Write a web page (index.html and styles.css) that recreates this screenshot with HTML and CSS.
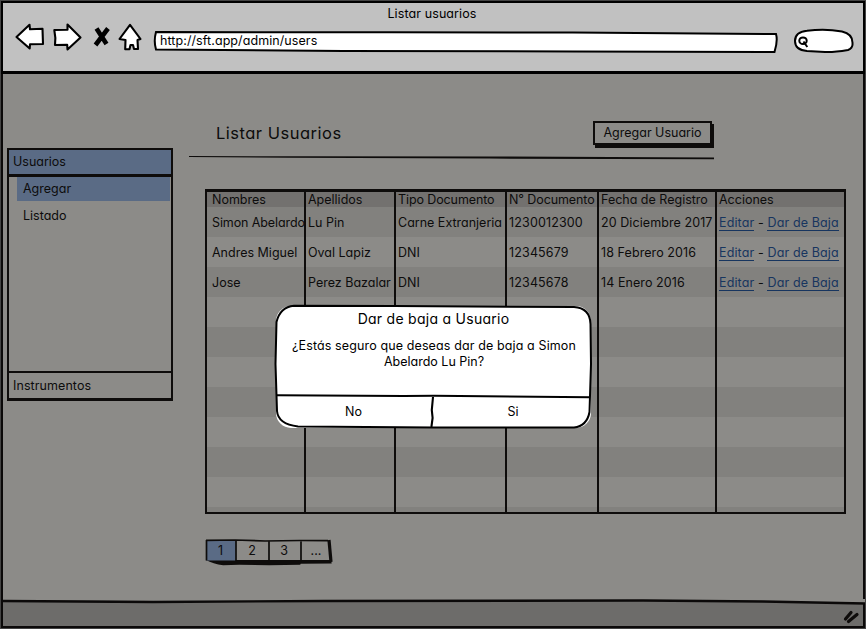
FILE: index.html
```html
<!DOCTYPE html>
<html lang="es">
<head>
<meta charset="utf-8">
<title>Listar usuarios</title>
<link rel="stylesheet" href="styles.css">
</head>
<body>
<div class="window">
  <header class="chrome">
    <div class="window-title">Listar usuarios</div>
    <div class="toolbar">
      <svg class="nav-icons" width="130" height="32" viewBox="0 0 130 32">
        <g fill="#fff" stroke="#000" stroke-width="2.1" stroke-linejoin="round">
          <path d="M3.500 16 16.500 3.800l.5 4.500 12.500-.5.5 15.200-13 .2-.3 4.300z"/>
          <path d="M41.300 9l13.200-.3V3.500L67.500 16.500 54.500 28.500l-.3-4.800-12.200.3q1-7-.7-15z"/>
          <path d="M106.500 18 117 3.800 127.500 18l-3 1 .5 9h-4l-1-4h-2.500l-1 4.300h-4.300l.3-9.300z"/>
        </g>
        <path d="M83.500 7.500 93.500 23M95 7.500 82.500 24" fill="none" stroke="#000" stroke-width="4.600"/>
      </svg>
      <div class="address">
        <svg class="outline" width="626" height="23" viewBox="0 0 626 23"><path d="M3 2 235 2.300 420 2.500 623 4Q625 11 621.500 22L420 21.500 190 21 3 19.500Q.5 11 3 2z" fill="#fff" stroke="#000" stroke-width="2"/></svg>
        <span class="url">http://sft.app/admin/users</span>
      </div>
      <svg class="search" width="62" height="26" viewBox="0 0 62 26">
        <path d="M14 2.800Q32 .2 49 3.500 60 6 59.500 15.500 60 20 55 22 40 24.500 32 24L14 23Q2 22 2 13 2 4 14 2.800z" fill="#fff" stroke="#000" stroke-width="2"/>
        <ellipse cx="10" cy="12.700" rx="3.700" ry="3.300" fill="#fff" stroke="#000" stroke-width="2"/><path d="M10.500 13.500l3.800 5.500" stroke="#000" stroke-width="2"/>
      </svg>
    </div>
  </header>

  <main class="content">
    <nav class="sidebar">
      <div class="group active">Usuarios</div>
      <div class="items">
        <div class="item selected">Agregar</div>
        <div class="item">Listado</div>
      </div>
      <div class="group last">Instrumentos</div>
    </nav>

    <section class="main">
      <div class="heading">
        <h1>Listar Usuarios</h1>
        <button class="add">Agregar Usuario</button>
      </div>
      <svg class="rule" width="525" height="4" viewBox="0 0 525 4"><path d="M0 0 120 .3 300 .5 525 1.600V3.200L300 2.600 100 1.800 0 .9z" fill="#0e0c0b"/></svg>

      <table class="users">
        <colgroup><col class="c1"><col class="c2"><col class="c3"><col class="c4"><col class="c5"><col class="c6"></colgroup>
        <thead><tr><th>Nombres</th><th>Apellidos</th><th class="snug">Tipo Documento</th><th class="snug">N° Documento</th><th>Fecha de Registro</th><th>Acciones</th></tr></thead>
        <tbody>
          <tr><td class="snug">Simon Abelardo</td><td>Lu Pin</td><td>Carne Extranjeria</td><td>1230012300</td><td>20 Diciembre 2017</td><td><a>Editar</a> - <a>Dar de Baja</a></td></tr>
          <tr><td>Andres Miguel</td><td>Oval Lapiz</td><td>DNI</td><td>12345679</td><td>18 Febrero 2016</td><td><a>Editar</a> - <a>Dar de Baja</a></td></tr>
          <tr><td>Jose</td><td>Perez Bazalar</td><td>DNI</td><td>12345678</td><td>14 Enero 2016</td><td><a>Editar</a> - <a>Dar de Baja</a></td></tr>
          <tr><td></td><td></td><td></td><td></td><td></td><td></td></tr>
          <tr><td></td><td></td><td></td><td></td><td></td><td></td></tr>
          <tr><td></td><td></td><td></td><td></td><td></td><td></td></tr>
          <tr><td></td><td></td><td></td><td></td><td></td><td></td></tr>
          <tr><td></td><td></td><td></td><td></td><td></td><td></td></tr>
          <tr><td></td><td></td><td></td><td></td><td></td><td></td></tr>
          <tr><td></td><td></td><td></td><td></td><td></td><td></td></tr>
          <tr class="tail"><td></td><td></td><td></td><td></td><td></td><td></td></tr>
        </tbody>
      </table>

      <div class="pager">
        <svg class="outline" width="128" height="27" viewBox="0 0 128 27">
          <path d="M1 21h125l.7 3.500-31 .2-.5 1-31 .5-30-.5-16 .5Q8 25 1 21z" fill="#0e0c0b"/>
          <path d="M1.500 1.500h29.300v20H1.500z" fill="#5a6b85"/>
          <path d="M1 1.300 30 1 60 2l35-.5 28 .2M1.500 1v20.500M31 1.500V22M64 1.500V22M96 1.500V23" fill="none" stroke="#0e0c0b" stroke-width="1.700"/>
          <path d="M124 1l2 22" stroke="#0e0c0b" stroke-width="3.200"/>
        </svg>
        <span>1</span><span>2</span><span>3</span><span class="dots">...</span>
      </div>
    </section>
  </main>

  <footer class="status">
    <svg class="edge" width="862" height="6" viewBox="0 0 862 6"><path d="M0 0H862V4L760 2 640 1 320 1 150 2 0 1z" fill="#8c8b88"/><path d="M0 2 150 3 320 2 640 1.500 760 2.500 862 4.500" fill="none" stroke="#0b0909" stroke-width="2.400"/></svg>
    <svg class="grip" width="20" height="16" viewBox="0 0 20 16"><path d="M3.500 11 9 4.500M6.500 13.500 15 6.500" stroke="#0e0c0b" stroke-width="3.200" stroke-linecap="round"/></svg>
  </footer>

  <div class="modal" role="dialog">
    <svg class="outline" width="320" height="126" viewBox="0 0 320 126">
      <rect x="2" y="2" width="315" height="122" rx="15" fill="#fff"/>
      <path d="M20 1.700 120 2 300 3Q316 4 316.500 20L317 60 315.500 108Q313 122 300 123.500L160 123.500 24 122.500Q4 120 3 107L1.500 60 2.500 18Q6 3 20 1.700z" fill="#fff" stroke="#000" stroke-width="2"/>
      <path d="M3 91.300 130 92 160 91.800 316 93.200M159 93l-1.200 13 .8 8-1.200 9" fill="none" stroke="#000" stroke-width="2.100"/>
    </svg>
    <h2>Dar de baja a Usuario</h2>
    <p>¿Estás seguro que deseas dar de baja a Simon<br><span class="line2">Abelardo Lu Pin?</span></p>
    <div class="choices"><span>No</span><span>Si</span></div>
  </div>
</div>
</body>
</html>
```
FILE: styles.css
```css
* { box-sizing: border-box; }
body {
  margin: 0;
  background: #555;
  font-family: Inter, "Open Sans", sans-serif;
  font-feature-settings: "cv11";
  font-size: 12.5px;
  line-height: 16px;
  color: #0d0c0c;
}
.window {
  position: relative;
  display: flex;
  flex-direction: column;
  width: 866px;
  height: 629px;
  padding: 1px;
  background: #444;
}
.chrome {
  height: 73px;
  background: #c1c1c1;
  border: 2px solid #000;
  border-bottom-width: 3px;
}
.window-title { padding: 3px 2px 0 0; text-align: center; height: 20px; color: #000; letter-spacing: .1px; }
.toolbar { display: flex; align-items: flex-start; padding-left: 10px; }
.nav-icons { flex: none; margin-top: -2px; }
.address { position: relative; width: 626px; height: 23px; margin: 7px 0 0 10px; padding: 3px 0 0 7px; color: #000; letter-spacing: .08px; }
.outline { position: absolute; left: 0; top: 0; z-index: -1; }
.address, .pager { isolation: isolate; }
.search { margin: 5px 0 0 14px; }
.content {
  display: flex;
  flex: 1;
  background: #8c8b88;
  border: solid #0b0909;
  border-width: 0 2px;
}
.sidebar {
  width: 166px;
  height: 253px;
  margin: 74px 0 0 4px;
  border: 2px solid #0e0c0b;
  border-bottom-width: 3px;
  display: flex;
  flex-direction: column;
}
.group { padding: 3px 4px; height: 27px; }
.group.active { background: #5a6b85; padding-top: 4px; border-bottom: 3px solid #0e0c0b; }
.group.last { border-top: 2px solid #0e0c0b; padding-top: 5px; letter-spacing: .08px; }
.items { flex: 1; padding-left: 8px; }
.item { height: 27px; padding: 4px 6px 0; }
.item.selected { height: 24px; margin: 0 1px 3px 0; background: #5a6b85; }
.main { flex: 1; margin-left: 16px; }
.heading { display: flex; justify-content: space-between; width: 525px; height: 82px; padding: 47px 0 0 27px; }
h1 { margin: 2px 0 0; font-size: 16.5px; font-weight: 400; line-height: 20px; letter-spacing: .5px; }
.add {
  width: 119px;
  height: 24px;
  margin-right: 2px;
  padding: 0;
  font: inherit;
  font-feature-settings: inherit;
  color: inherit;
  background: #8c8b88;
  border: 2px solid #0e0c0b;
  box-shadow: 2px 3px 0 #0e0c0b;
}
.rule { display: block; }
.users {
  width: 641px;
  height: 325px;
  margin: 29px 0 0 16px;
  border: 2px solid #0e0c0b;
  border-top-width: 3px;
  border-spacing: 0;
  table-layout: fixed;
}
.c1 { width: 99px; } .c2 { width: 90px; } .c3 { width: 111px; }
.c4 { width: 92px; } .c5 { width: 118px; } .c6 { width: 127px; }
.users th, .users td {
  padding: 2px 0 0 2px;
  height: 30px;
  font-weight: 400;
  text-align: left;
  white-space: nowrap;
  border-right: 2px solid #0e0c0b;
}
.users th { height: 15px; line-height: 15px; padding-top: 0; background: #73716f; }
.users th:last-child, .users td:last-child { border-right: 0; }
.users th:first-child, .users td:first-child { padding-left: 5px; }
.users tbody tr:nth-child(odd) { background: #82817e; }
.users .tail td { height: 5px; padding: 0; }
.users td:nth-child(4) { letter-spacing: .15px; }
.users td:nth-child(5) { letter-spacing: .08px; }
.users td:nth-child(6) { letter-spacing: .13px; }
.users .snug { letter-spacing: -.1px; }
.users a { color: #17355f; border-bottom: 1px solid #17355f; }
.pager { position: relative; display: flex; width: 128px; margin: 25px 0 0 16px; padding-top: 4px; }
.pager span { width: 32px; padding-right: 2px; text-align: center; }
.pager span:first-of-type { padding-right: 1px; }
.status {
  position: relative;
  display: flex;
  justify-content: flex-end;
  height: 28px;
  padding: 8px 1px 0;
  background: #6d6c6a;
  border: 2px solid #0b0909;
  border-top: 0;
}
.edge { position: absolute; left: 0; top: -1px; }
.modal {
  position: absolute;
  left: 274px;
  top: 304px;
  width: 320px;
  height: 126px;
  isolation: isolate;
  text-align: center;
  color: #000;
}
h2 { margin: 5px 0 0; padding-right: 1px; font-size: 14px; font-weight: 400; line-height: 20px; letter-spacing: .27px; }
.modal p { margin: 9px 0 0; height: 61px; letter-spacing: .12px; }
.line2 { letter-spacing: 0; }
.choices { display: flex; padding-top: 5px; }
.choices span { width: 160px; }
.choices span:first-child { width: 159px; }
```
